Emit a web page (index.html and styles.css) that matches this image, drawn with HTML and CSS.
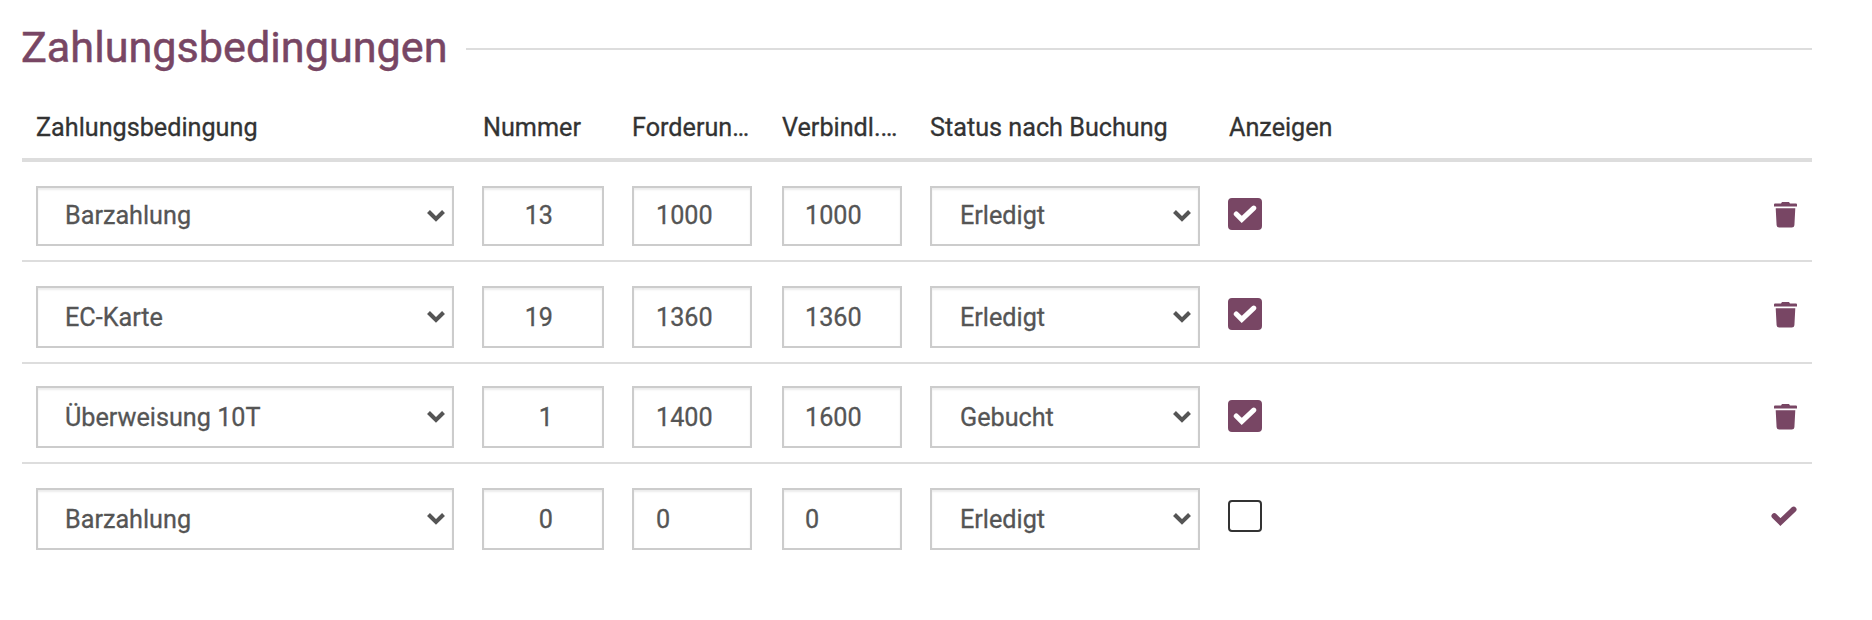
FILE: index.html
```
<!DOCTYPE html>
<html lang="de">
<head>
<meta charset="utf-8">
<title>Zahlungsbedingungen</title>
<link rel="stylesheet" href="styles.css">
</head>
<body>
<svg class="sprite" aria-hidden="true">
  <symbol id="chevron" viewBox="0 0 20 14"><path d="M2.5 2.6 10 9.9 17.5 2.6" fill="none" stroke="currentColor" stroke-width="4.2"/></symbol>
  <symbol id="check" viewBox="0 0 26 20"><path d="M3.3 9.9 9.4 16 22.7 3.4" fill="none" stroke="currentColor" stroke-width="5.6" stroke-linecap="round"/></symbol>
  <symbol id="trash" viewBox="0 0 23 26"><path d="M8 0h7l1 1.400h6q1 0 1 1v2.200H0V2.400q0-1 1-1h6zM1.700 6.200h19.600l-.9 17q-.2 2.400-2.600 2.400H5.200q-2.400 0-2.600-2.400z" fill="currentColor"/></symbol>
</svg>
<main class="panel">
  <h1 class="title"><span>Zahlungsbedingungen</span></h1>
  <div class="row head">
    <div>Zahlungsbedingung</div>
    <div class="inset">Nummer</div>
    <div>Forderun…</div>
    <div>Verbindl.…</div>
    <div>Status nach Buchung</div>
    <div class="inset">Anzeigen</div>
  </div>
  <div class="row short">
    <div class="field select">Barzahlung<svg class="chevron"><use href="#chevron"/></svg></div>
    <div class="field number">13</div>
    <div class="field claim">1000</div>
    <div class="field debt">1000</div>
    <div class="field select status">Erledigt<svg class="chevron"><use href="#chevron"/></svg></div>
    <div class="box checked"><svg class="mark"><use href="#check"/></svg></div>
    <svg class="trash"><use href="#trash"/></svg>
  </div>
  <div class="row">
    <div class="field select">EC-Karte<svg class="chevron"><use href="#chevron"/></svg></div>
    <div class="field number">19</div>
    <div class="field claim">1360</div>
    <div class="field debt">1360</div>
    <div class="field select status">Erledigt<svg class="chevron"><use href="#chevron"/></svg></div>
    <div class="box checked"><svg class="mark"><use href="#check"/></svg></div>
    <svg class="trash"><use href="#trash"/></svg>
  </div>
  <div class="row tight">
    <div class="field select">Überweisung 10T<svg class="chevron"><use href="#chevron"/></svg></div>
    <div class="field number">1</div>
    <div class="field claim">1400</div>
    <div class="field debt">1600</div>
    <div class="field select status">Gebucht<svg class="chevron"><use href="#chevron"/></svg></div>
    <div class="box checked"><svg class="mark"><use href="#check"/></svg></div>
    <svg class="trash"><use href="#trash"/></svg>
  </div>
  <div class="row last">
    <div class="field select">Barzahlung<svg class="chevron"><use href="#chevron"/></svg></div>
    <div class="field number">0</div>
    <div class="field claim">0</div>
    <div class="field debt">0</div>
    <div class="field select status">Erledigt<svg class="chevron"><use href="#chevron"/></svg></div>
    <div class="box"></div>
    <svg class="confirm"><use href="#check"/></svg>
  </div>
</main>
</body>
</html>
```
FILE: styles.css
```
* { box-sizing: border-box; }
body {
  margin: 0;
  background: #fff;
  color: #333;
  font: 25.2px/36px Roboto, "Liberation Sans", sans-serif;
}
.sprite { display: none; }
.panel { width: 1812px; padding: 20px 0 0 22px; }
.title {
  display: flex;
  align-items: center;
  height: 58px;
  margin: 0 0 0 -1px;
  color: #784664;
  font-size: 43.2px;
  font-weight: 400;
  line-height: 54px;
  -webkit-text-stroke: .5px;
}
.title span { width: 445px; padding-bottom: 3px; }
.title::after { content: ""; flex: 1; height: 2px; background: #ddd; }
.row {
  display: grid;
  grid-template-columns: 418px 122px 122px 120px 270px 110px 1fr;
  column-gap: 28px;
  align-items: start;
  height: 102px;
  padding: 24px 14px 0;
  border-bottom: 2px solid #ddd;
  white-space: nowrap;
}
.head { height: 84px; padding-top: 32px; border-bottom-width: 4px; -webkit-text-stroke: .3px; }
.inset { padding-left: 1px; }
.field {
  display: flex;
  align-items: center;
  height: 62px;
  padding: 2px 22px 0;
  border: 2px solid #ccc;
  box-shadow: inset 0 2px 2px rgba(0, 0, 0, .075);
  color: #555;
  -webkit-text-stroke: .3px;
}
.number { justify-content: flex-end; padding-right: 49px; }
.claim { width: 120px; }
.debt { padding-left: 21px; }
.select { justify-content: space-between; padding-right: 6px; padding-left: 27px; }
.status { padding-left: 28px; }
.chevron { width: 20px; height: 14px; margin-bottom: 2px; }
.box {
  display: flex;
  align-items: center;
  justify-content: center;
  width: 34px;
  height: 32px;
  margin-top: 12px;
  border: 2px solid #333;
  border-radius: 4px;
}
.checked { border-color: #784664; background: #784664; color: #fff; }
.mark { width: 24px; height: 18px; }
.trash, .confirm { justify-self: end; color: #784664; }
.trash { width: 23px; height: 26px; margin: 16px 1px 0 0; }
.confirm { width: 26px; height: 20px; margin: 18px 1px 0 0; }
.short { height: 100px; }
.short .field { height: 60px; padding-top: 0; padding-bottom: 1px; }
.short .chevron { margin-bottom: 0; }
.tight { height: 100px; padding-top: 22px; }
.tight .box { margin-top: 14px; }
.tight .trash { margin-top: 18px; }
.last { border-bottom: 0; }
```
